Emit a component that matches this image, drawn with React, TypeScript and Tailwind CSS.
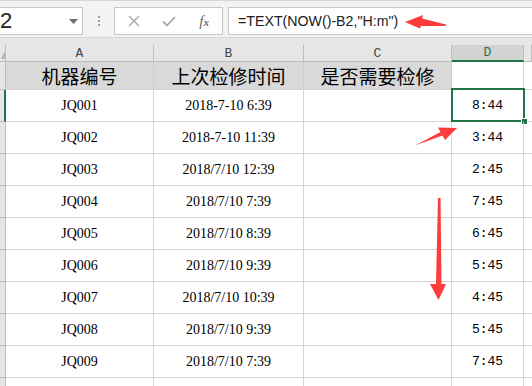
import React from 'react'

const rows = [
  ['JQ001', '2018-7-10 6:39', '8:44'],
  ['JQ002', '2018-7-10 11:39', '3:44'],
  ['JQ003', '2018/7/10 12:39', '2:45'],
  ['JQ004', '2018/7/10 7:39', '7:45'],
  ['JQ005', '2018/7/10 8:39', '6:45'],
  ['JQ006', '2018/7/10 9:39', '5:45'],
  ['JQ007', '2018/7/10 10:39', '4:45'],
  ['JQ008', '2018/7/10 9:39', '5:45'],
  ['JQ009', '2018/7/10 7:39', '7:45'],
  ['', '', ''],
]

const serif = { fontFamily: '"Liberation Serif", serif' }
const mono = { fontFamily: '"Liberation Mono", monospace' }
const cjk = { fontFamily: '"Noto Sans CJK SC", sans-serif' }
const sans = { fontFamily: '"Liberation Sans", sans-serif' }

function Toolbar() {
  return (
    <div className="h-[38px] bg-[#f3f3f3] border-t border-[#d6d6d6] border-b flex items-start pt-[6px] overflow-hidden">
      {/* name box, cut at the left edge */}
      <div className="w-[83px] h-[28px] bg-white border border-l-0 border-[#c6c6c6] flex items-center relative shrink-0">
        <span className="text-[22px] leading-none text-[#222]" style={sans}>2</span>
        <svg className="absolute right-[4px] top-[11px]" width="9" height="5" viewBox="0 0 9 5">
          <polygon points="0,0 9,0 4.5,5" fill="#6b6b6b" />
        </svg>
      </div>
      <div className="w-[31px] h-[28px] flex flex-col items-center justify-center gap-[2px] shrink-0">
        <span className="w-[2px] h-[2px] bg-[#a0a0a0]" />
        <span className="w-[2px] h-[2px] bg-[#a0a0a0]" />
        <span className="w-[2px] h-[2px] bg-[#a0a0a0]" />
      </div>
      {/* buttons */}
      <div className="w-[109px] h-[28px] bg-white border border-[#c6c6c6] flex items-center shrink-0">
        <div className="w-[36px] flex justify-center pl-[2px]">
          <svg width="12" height="12" viewBox="0 0 12 12">
            <path d="M1 1 L11 11 M11 1 L1 11" stroke="#a8a8a8" strokeWidth="1.4" />
          </svg>
        </div>
        <div className="w-[36px] flex justify-center">
          <svg width="14" height="11" viewBox="0 0 14 11">
            <path d="M1 5.5 L5 9.5 L13 1" stroke="#a8a8a8" strokeWidth="1.8" fill="none" />
          </svg>
        </div>
        <div className="w-[36px] flex justify-center">
          <span className="italic text-[15px] text-[#666] leading-none" style={serif}>
            f<span className="text-[11px] font-bold">x</span>
          </span>
        </div>
      </div>
      {/* formula */}
      <div className="ml-[5px] flex-1 h-[28px] bg-white border border-[#c6c6c6] border-r-0 flex items-center pl-[9px]">
        <span className="text-[14.2px] text-[#222] leading-none" style={sans}>
          =TEXT(NOW()-B2,"H:m")
        </span>
      </div>
    </div>
  )
}

export default function App() {
  const cols = ['A', 'B', 'C', 'D', '']
  return (
    <div className="w-[532px] h-[386px] overflow-hidden bg-white relative">
      <Toolbar />
      <div className="h-[7px] bg-[#e6e6e6]" />
      <div className="grid grid-cols-[6px_148px_150px_148px_72px_8px]">
        {/* column headers */}
        <div className="h-[17px] bg-[#e6e6e6] border-r border-b border-[#bdbdbd] relative">
          <svg className="absolute right-0 bottom-[2px]" width="4" height="8" viewBox="0 0 4 8">
            <polygon points="4,0 4,8 0,8" fill="#b4b4b4" />
          </svg>
        </div>
        {cols.map((c) =>
          c === 'D' ? (
            <div key="hD" className="h-[17px] bg-[#d3d3d3] border-r border-[#bdbdbd] border-b-2 border-b-[#217346] flex items-center justify-center text-[13px] text-[#217346] leading-none" style={mono}>
              {c}
            </div>
          ) : (
            <div key={'h' + c} className="h-[17px] bg-[#e6e6e6] border-r border-b border-[#bdbdbd] flex items-center justify-center text-[13px] text-[#444] leading-none" style={mono}>
              {c}
            </div>
          )
        )}

        {/* row 1 headings */}
        <div className="h-[28px] bg-[#e6e6e6] border-r border-b border-[#bdbdbd]" />
        {['机器编号', '上次检修时间', '是否需要检修'].map((t) => (
          <div key={t} className="h-[28px] bg-[#d9d9d9] border-r border-b border-[#d0d0d0] flex items-center justify-center text-[19px] text-black leading-none" style={cjk}>
            {t}
          </div>
        ))}
        <div className="h-[28px] border-r border-b border-[#d4d4d4]" />
        <div className="h-[28px] border-b border-[#d4d4d4]" />

        {/* data rows */}
        {rows.map((r, i) => (
          <React.Fragment key={i}>
            <div className={`h-[32px] bg-[#e6e6e6] border-b border-[#bdbdbd] ${i === 0 ? 'border-r-2 border-r-[#217346]' : 'border-r'}`} />
            <div className="h-[32px] border-r border-b border-[#d4d4d4] flex items-center justify-center text-[14px] text-black" style={serif}>
              {r[0]}
            </div>
            <div className="h-[32px] border-r border-b border-[#d4d4d4] flex items-center justify-center text-[14px] text-black" style={serif}>
              {r[1]}
            </div>
            <div className="h-[32px] border-r border-b border-[#d4d4d4]" />
            <div className="h-[32px] border-r border-b border-[#d4d4d4] flex items-center justify-center text-[13px] text-black relative" style={mono}>
              {r[2]}
              {i === 0 && (
                <div className="absolute -left-[1px] -top-[2px] w-[74px] h-[34px] border-2 border-[#217346]">
                  <div className="absolute -right-[5px] -bottom-[5px] w-[7px] h-[7px] bg-[#217346] border border-white" />
                </div>
              )}
            </div>
            <div className="h-[32px] border-b border-[#d4d4d4]" />
          </React.Fragment>
        ))}
      </div>

      {/* annotation arrows */}
      <svg className="absolute left-0 top-0 pointer-events-none" width="532" height="386" viewBox="0 0 532 386">
        <polygon points="405,22 423,15 422,18.5 446,24.5 446,26 421,26 420,28.5" fill="#ff3b3b" />
        <polygon points="457,128 438,127.5 440.5,132 415,145.5 442.5,135.5 445,140" fill="#ff3b3b" />
        <polygon points="438,198 440.5,198 441.5,284 446,284 438.5,300 430,284 436,284" fill="#ff3b3b" />
      </svg>
    </div>
  )
}
